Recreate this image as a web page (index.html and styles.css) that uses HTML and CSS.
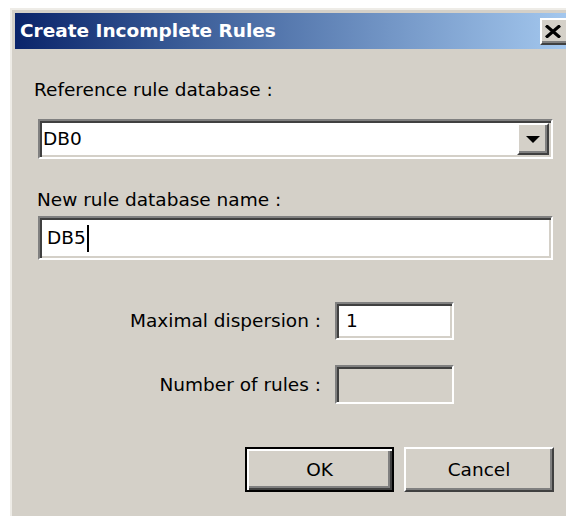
FILE: index.html
```html
<!DOCTYPE html>
<html lang="en">
<head>
<meta charset="utf-8">
<title>Create Incomplete Rules</title>
<link rel="stylesheet" href="styles.css">
</head>
<body>
<div class="window">
  <div class="titlebar">
    <span class="title">Create Incomplete Rules</span>
    <button class="close" type="button" aria-label="Close">
      <svg width="16" height="13" viewBox="0 0 16 13"><path d="M1 0.5 L15 12.5 M15 0.5 L1 12.5" stroke="#000" stroke-width="3.2" fill="none"/></svg>
    </button>
  </div>
  <div class="content">
    <div class="label label-ref">Reference rule database :</div>
    <div class="combo sunken">
      <span class="combo-value">DB0</span>
      <span class="combo-btn raised">
        <svg width="14" height="7" viewBox="0 0 14 7"><path d="M0 0 H14 L7 7 Z" fill="#000"/></svg>
      </span>
    </div>
    <div class="label label-new">New rule database name :</div>
    <div class="edit sunken"><span>DB5</span><span class="caret"></span></div>
    <div class="params">
      <span class="param-label">Maximal dispersion :</span>
      <div class="field sunken">1</div>
      <span class="param-label">Number of rules :</span>
      <div class="field field-off sunken"></div>
    </div>
    <div class="actions">
      <button class="btn btn-default" type="button">OK</button>
      <button class="btn" type="button">Cancel</button>
    </div>
  </div>
</div>
</body>
</html>
```
FILE: styles.css
```css
html, body {
  margin: 0;
  padding: 0;
  background: #fff;
  overflow: hidden;
}

body {
  width: 566px;
  height: 516px;
  font-family: "DejaVu Sans", "Liberation Sans", sans-serif;
  font-size: 18.5px;
  line-height: 22px;
  color: #000;
}

/* dialog frame, its right and bottom edges run off the page */
.window {
  margin: 8px 0 0 10px;
  width: 551px;
  height: 503px;
  overflow: hidden;
  border-left: 2px solid #eeece7;
  border-top: 2px solid #eeece7;
  padding: 3px 0 0 3px;
  background: #d4d0c8;
}

.titlebar {
  height: 36px;
  width: 561px;
  display: flex;
  align-items: center;
  justify-content: space-between;
  padding: 0 4px 0 5px;
  box-sizing: border-box;
  background: linear-gradient(to right, #0a246a 0%, #3a5c97 30%, #a6caf0 100%);
}

.title {
  color: #fff;
  font-weight: bold;
  font-size: 18.5px;
}

.close {
  width: 32px;
  height: 27px;
  margin-top: 1px;
  padding: 0 0 0 3px;
  display: flex;
  align-items: center;
  justify-content: flex-start;
  background: #d4d0c8;
  border: 2px solid;
  border-color: #fff #404040 #404040 #fff;
  box-shadow: inset -2px -2px 0 #808080;
  box-sizing: border-box;
}

/* 3D edges */
.sunken {
  box-sizing: border-box;
  border: 2px solid;
  border-color: #808080 #fff #fff #808080;
  box-shadow: inset 2px 2px 0 #404040, inset -2px -2px 0 #d4d0c8;
  background: #fff;
}

.raised {
  box-sizing: border-box;
  border: 2px solid;
  border-color: #fff #404040 #404040 #fff;
  box-shadow: inset -2px -2px 0 #808080;
  background: #d4d0c8;
}

.content {
  padding-left: 23px;
}

.label-ref {
  margin-top: 30px;
  margin-left: -4px;
}

.combo {
  margin-top: 18px;
  width: 515px;
  height: 40px;
  display: flex;
  align-items: stretch;
}

.combo-value {
  flex: 1;
  display: flex;
  align-items: center;
  padding-left: 3px;
}

.combo-btn {
  width: 32px;
  margin: 2px 2px 2px 0;
  display: flex;
  align-items: center;
  justify-content: center;
}

.label-new {
  margin-top: 30px;
  margin-left: -1px;
}

.edit {
  margin-top: 5px;
  width: 515px;
  height: 44px;
  display: flex;
  align-items: center;
  padding-left: 7px;
}

.caret {
  display: inline-block;
  width: 2px;
  height: 27px;
  margin-left: 1px;
  background: #000;
}

.params {
  margin-top: 42px;
  display: grid;
  grid-template-columns: 283px 119px;
  grid-template-rows: 38px 39px;
  column-gap: 14px;
  row-gap: 25px;
  align-items: center;
}

.param-label {
  text-align: right;
}

.field {
  height: 100%;
  display: flex;
  align-items: center;
  padding-left: 9px;
}

.field-off {
  background: #d4d0c8;
}

.actions {
  margin-top: 43px;
  width: 516px;
  display: flex;
  justify-content: flex-end;
  gap: 10px;
}

.btn {
  width: 150px;
  height: 45px;
  font: inherit;
  color: #000;
  background: #d4d0c8;
  border: 2px solid;
  border-color: #fff #404040 #404040 #fff;
  box-shadow: inset -2px -2px 0 #808080;
  padding: 0;
}

.btn-default {
  width: 149px;
  border-color: #000;
  box-shadow: inset 2px 2px 0 #fff, inset -2px -2px 0 #404040, inset -4px -4px 0 #808080;
}
```
